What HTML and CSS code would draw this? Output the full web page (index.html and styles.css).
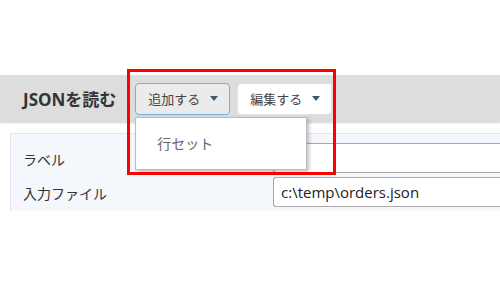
FILE: index.html
```html
<!DOCTYPE html>
<html lang="ja">
<head>
    <meta charset="UTF-8">
    <title>JSONを読む</title>
    <link rel="stylesheet" href="styles.css">
</head>
<body>
<div class="page">
    <div class="toolbar">
        <h1 class="title">JSONを読む</h1>
        <div class="menus">
            <div class="menu">
                <button class="menu-btn active">追加する <span class="caret"></span></button>
                <div class="dropdown">
                    <div class="dropdown-item">行セット</div>
                </div>
            </div>
            <div class="menu">
                <button class="menu-btn">編集する <span class="caret"></span></button>
            </div>
            <div class="highlight"></div>
        </div>
    </div>

    <div class="panel">
        <label class="field-label">ラベル</label>
        <input class="field-input" type="text" value="">
        <label class="field-label">入力ファイル</label>
        <input class="field-input" type="text" value="c:\temp\orders.json">
    </div>
</div>
</body>
</html>
```

FILE: styles.css
```css
html, body {
    margin: 0;
    background: #fff;
    overflow: hidden;
}
body {
    font-family: "Open Sans", "Noto Sans CJK JP", sans-serif;
    color: #333;
}
.page {
    padding-top: 75px;
}
.toolbar {
    display: flex;
    align-items: center;
    height: 47px;
    padding-left: 23px;
    background: #dddddd;
    box-shadow: 0 1px 2px rgba(0, 0, 0, 0.18);
    position: relative;
    z-index: 2;
}
.title {
    margin: 0 19px 0 0;
    font-size: 17px;
    font-weight: bold;
    color: #333;
}
.menus {
    display: flex;
    gap: 7px;
    position: relative;
}
.menu {
    position: relative;
}
.menu-btn {
    display: flex;
    align-items: center;
    gap: 10px;
    height: 32px;
    padding: 0 11px 0 12px;
    white-space: nowrap;
    font-family: inherit;
    font-size: 13px;
    color: #444;
    background: #fff;
    border: 1px solid #e2e2e2;
    border-radius: 4px;
}
.menu-btn.active {
    background: #ebebeb;
    border-color: #78aedb;
}
.caret {
    width: 0;
    height: 0;
    border-left: 4px solid transparent;
    border-right: 4px solid transparent;
    border-top: 5px solid #3f5868;
}
.dropdown {
    position: absolute;
    left: 0;
    top: 34px;
    width: 170px;
    height: 51px;
    background: #fff;
    border: 1px solid #bdbdbd;
    box-shadow: 2px 2px 4px rgba(0, 0, 0, 0.25);
    display: flex;
    align-items: center;
}
.dropdown-item {
    padding-left: 21px;
    font-size: 14px;
    color: #666;
}
.highlight {
    position: absolute;
    left: -8px;
    top: -14px;
    width: 203px;
    height: 100px;
    border: 3px solid #ff0000;
    pointer-events: none;
}
.panel {
    display: grid;
    grid-template-columns: 250px 260px;
    row-gap: 4px;
    align-items: center;
    margin: 11px 0 0 10px;
    padding: 9px 0 4px 12px;
    background: #f4f7fb;
    border-top: 1px solid #e2e6ec;
    border-left: 1px solid #e2e6ec;
}
.field-label {
    font-size: 14px;
    color: #333;
    padding-top: 2px;
}
.field-input {
    height: 30px;
    box-sizing: border-box;
    padding: 0 7px;
    font-family: inherit;
    font-size: 15px;
    color: #222;
    background: #fff;
    border: 1px solid #aaa;
    border-right: none;
    border-radius: 3px 0 0 3px;
}
```
